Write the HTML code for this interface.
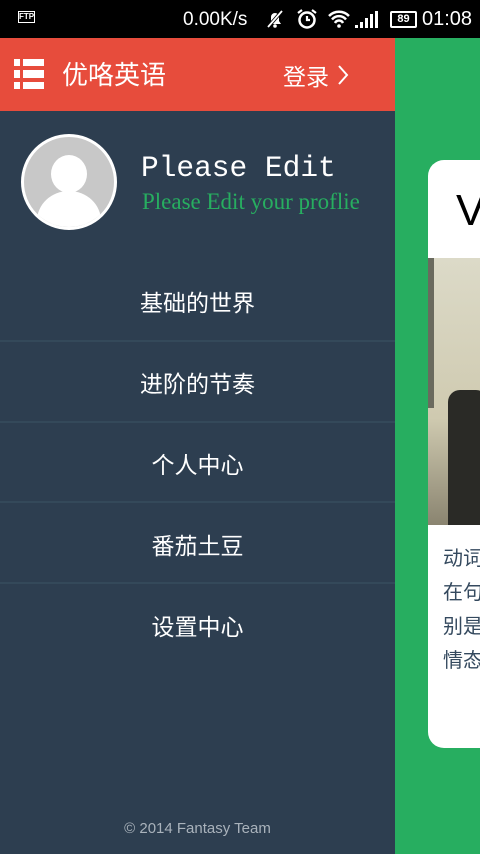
<!DOCTYPE html>
<html><head><meta charset="utf-8"><style>
*{margin:0;padding:0;box-sizing:border-box}
body{width:480px;height:854px;overflow:hidden;position:relative;background:#27ae60;font-family:"Liberation Sans","Noto Sans CJK SC",sans-serif}
.status{position:absolute;left:0;top:0;width:480px;height:38px;background:#000;color:#fff;font-size:19px}
.drawer{position:absolute;left:0;top:38px;width:395px;height:816px;background:#2d3e50}
.head{height:73px;background:#e74c3c;position:relative;color:#fff}
.card{position:absolute;left:428px;top:160px;width:80px;height:588px;background:#fff;border-radius:16px;overflow:hidden}
.item{position:absolute;left:0;width:395px;text-align:center;color:#fff;font-size:23px;font-family:"Noto Sans CJK SC",sans-serif;line-height:30px}
.sep{position:absolute;left:0;width:395px;height:2px;background:#34495a}
</style></head><body>
<div class="status">
 <div style="position:absolute;left:18px;top:11px;width:17px;height:12px;border:1.5px solid #fff;font-size:8px;line-height:9px;text-align:center;font-weight:bold">FTP</div>
 <div style="position:absolute;left:183px;top:9px">0.00K/s</div>
 <svg style="position:absolute;left:265px;top:9px" width="20" height="20" viewBox="0 0 20 20"><path d="M4 15h12l-2-3V8a4 4 0 0 0-8 0v4z" fill="#fff"/><circle cx="10" cy="17" r="1.8" fill="#fff"/><path d="M3 18L17 2" stroke="#000" stroke-width="3.5"/><path d="M3 18L17 2" stroke="#fff" stroke-width="1.8"/></svg>
 <svg style="position:absolute;left:296px;top:8px" width="22" height="22" viewBox="0 0 22 22"><circle cx="11" cy="12" r="7.5" stroke="#fff" stroke-width="2.5" fill="none"/><path d="M11 8v4h3M2 5l4-3M20 5l-4-3" stroke="#fff" stroke-width="2.2" fill="none"/></svg>
 <svg style="position:absolute;left:327px;top:10px" width="24" height="18" viewBox="0 0 24 18"><path d="M2 6a14 14 0 0 1 20 0M5 9.5a9 9 0 0 1 14 0M8 13a4.5 4.5 0 0 1 8 0" stroke="#fff" stroke-width="2.5" fill="none"/><circle cx="12" cy="16" r="1.8" fill="#fff"/></svg>
 <svg style="position:absolute;left:355px;top:11px" width="24" height="17"><rect x="0" y="14" width="3" height="3" fill="#fff"/><rect x="5" y="11" width="3" height="6" fill="#fff"/><rect x="10" y="7" width="3" height="10" fill="#fff"/><rect x="15" y="3" width="3" height="14" fill="#fff"/><rect x="20" y="0" width="3" height="17" fill="#fff"/></svg>
 <div style="position:absolute;left:390px;top:11px;width:27px;height:17px;border:2px solid #fff;border-radius:2px;font-size:11px;line-height:13px;text-align:center;font-weight:bold">89</div>
 <div style="position:absolute;left:422px;top:8px;font-size:20px">01:08</div>
</div>
<div class="drawer">
 <div class="head">
  <svg style="position:absolute;left:14px;top:21px" width="30" height="30"><rect x="0" y="0" width="6" height="7" fill="#fff"/><rect x="9" y="0" width="21" height="7" fill="#fff"/><rect x="0" y="11" width="6" height="8" fill="#fff"/><rect x="9" y="11" width="21" height="8" fill="#fff"/><rect x="0" y="23" width="6" height="7" fill="#fff"/><rect x="9" y="23" width="21" height="7" fill="#fff"/></svg>
  <div style="position:absolute;left:62px;top:19px;font-size:26px;font-family:'Noto Sans CJK SC',sans-serif;line-height:34px">优咯英语</div>
  <div style="position:absolute;left:283px;top:21px;font-size:23px;font-family:'Noto Sans CJK SC',sans-serif;line-height:32px">登录</div>
  <svg style="position:absolute;left:337px;top:26px" width="12" height="22"><path d="M2 2l8 9-8 9" stroke="#fff" stroke-width="2" fill="none"/></svg>
 </div>
 <div style="position:absolute;left:21px;top:96px;width:96px;height:96px;border-radius:50%;background:#c8c8c8;border:3px solid #fff;overflow:hidden">
  <div style="position:absolute;left:27px;top:18px;width:36px;height:38px;border-radius:50%;background:#fff"></div>
  <div style="position:absolute;left:13px;top:54px;width:64px;height:60px;border-radius:50% 50% 0 0;background:#fff"></div>
 </div>
 <div style="position:absolute;left:141px;top:113px;color:#fff;font-size:29.5px;font-family:'Liberation Mono',monospace">Please Edit</div>
 <div style="position:absolute;left:142px;top:151px;color:#27ae60;font-size:23px;font-family:'Liberation Serif','DejaVu Serif',serif">Please Edit your proflie</div>
 <div class="item" style="top:248px">基础的世界</div>
 <div class="sep" style="top:302px"></div>
 <div class="item" style="top:329px">进阶的节奏</div>
 <div class="sep" style="top:383px"></div>
 <div class="item" style="top:410px">个人中心</div>
 <div class="sep" style="top:463px"></div>
 <div class="item" style="top:491px">番茄土豆</div>
 <div class="sep" style="top:544px"></div>
 <div class="item" style="top:572px">设置中心</div>
 <div style="position:absolute;left:0;width:395px;top:782px;text-align:center;color:#a9b2bb;font-size:15px">© 2014 Fantasy Team</div>
</div>
<div class="card">
 <div style="position:absolute;left:28px;top:26px;font-size:44px;color:#000;line-height:50px">V</div>
 <div style="position:absolute;left:0;top:98px;width:80px;height:267px;background:linear-gradient(180deg,#dcdac8,#cfcab0 60%,#8a8470)"></div>
 <div style="position:absolute;left:20px;top:230px;width:40px;height:135px;background:#2a2a26;border-radius:12px 12px 0 0"></div>
 <div style="position:absolute;left:0;top:98px;width:6px;height:150px;background:#6a6a5e"></div>
 <div style="position:absolute;left:15px;top:380px;color:#34495e;font-size:20px;line-height:34px;font-family:'Noto Sans CJK SC',sans-serif;white-space:nowrap">动词<br>在句<br>别是<br>情态</div>
</div>
</body></html>
